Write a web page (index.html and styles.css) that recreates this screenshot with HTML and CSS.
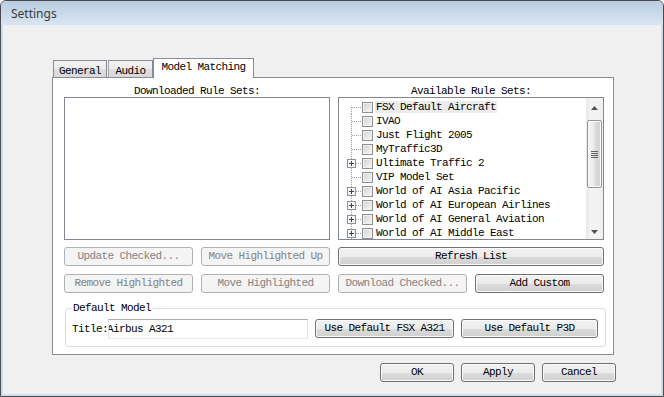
FILE: index.html
```html
<!DOCTYPE html>
<html lang="en">

<head>
    <meta charset="UTF-8">
    <title>Settings</title>
    <link rel="stylesheet" href="styles.css">
</head>

<body>
    <!-- tree connector pieces, reused by every row -->
    <svg class="defs" width="0" height="0">
        <symbol id="b-first" viewBox="0 0 15 14">
            <line x1="4.5" y1="7" x2="4.5" y2="14" stroke="#a0a0a0" stroke-dasharray="1 1" />
            <line x1="5" y1="7.5" x2="15" y2="7.5" stroke="#a0a0a0" stroke-dasharray="1 1" />
        </symbol>
        <symbol id="b-leaf" viewBox="0 0 15 14">
            <line x1="4.5" y1="0" x2="4.5" y2="14" stroke="#a0a0a0" stroke-dasharray="1 1" />
            <line x1="5" y1="7.5" x2="15" y2="7.5" stroke="#a0a0a0" stroke-dasharray="1 1" />
        </symbol>
        <symbol id="b-plus" viewBox="0 0 15 14">
            <line x1="4.5" y1="0" x2="4.5" y2="14" stroke="#a0a0a0" stroke-dasharray="1 1" />
            <line x1="9" y1="7.5" x2="15" y2="7.5" stroke="#a0a0a0" stroke-dasharray="1 1" />
            <rect x="0.5" y="3.5" width="8" height="8" fill="#f7f7f7" stroke="#919191" />
            <path d="M2 7.5h5M4.5 5v5" stroke="#1f4a8a" />
        </symbol>
    </svg>

    <div class="window">
        <div class="titlebar">Settings</div>
        <div class="client">
            <div class="tabstrip">
                <div class="tab tab-general">General</div>
                <div class="tab tab-audio">Audio</div>
                <div class="tab tab-models active">Model Matching</div>
            </div>
            <div class="panel">
                <div class="grid">
                    <div class="label">Downloaded Rule Sets:</div>
                    <div class="label">Available Rule Sets:</div>

                    <div class="list"></div>
                    <div class="list avail">
                        <div class="tree">
                            <div class="node"><svg class="branch"><use href="#b-first" /></svg><span class="check"></span><span class="name focus">FSX Default Aircraft</span></div>
                            <div class="node"><svg class="branch"><use href="#b-leaf" /></svg><span class="check"></span><span class="name">IVAO</span></div>
                            <div class="node"><svg class="branch"><use href="#b-leaf" /></svg><span class="check"></span><span class="name">Just Flight 2005</span></div>
                            <div class="node"><svg class="branch"><use href="#b-leaf" /></svg><span class="check"></span><span class="name">MyTraffic3D</span></div>
                            <div class="node"><svg class="branch"><use href="#b-plus" /></svg><span class="check"></span><span class="name">Ultimate Traffic 2</span></div>
                            <div class="node"><svg class="branch"><use href="#b-leaf" /></svg><span class="check"></span><span class="name">VIP Model Set</span></div>
                            <div class="node"><svg class="branch"><use href="#b-plus" /></svg><span class="check"></span><span class="name">World of AI Asia Pacific</span></div>
                            <div class="node"><svg class="branch"><use href="#b-plus" /></svg><span class="check"></span><span class="name">World of AI European Airlines</span></div>
                            <div class="node"><svg class="branch"><use href="#b-plus" /></svg><span class="check"></span><span class="name">World of AI General Aviation</span></div>
                            <div class="node"><svg class="branch"><use href="#b-plus" /></svg><span class="check"></span><span class="name">World of AI Middle East</span></div>
                        </div>
                        <div class="vscroll">
                            <div class="arrow"><svg width="7" height="4"><path d="M3.5 0L7 4H0z" fill="#505050" /></svg></div>
                            <div class="thumb"><span class="grip"></span></div>
                            <div class="track"></div>
                            <div class="arrow"><svg width="7" height="4"><path d="M0 0H7L3.5 4z" fill="#505050" /></svg></div>
                        </div>
                    </div>

                    <button class="btn row1" disabled>Update Checked...</button>
                    <button class="btn row1" disabled>Move Highlighted Up</button>
                    <button class="btn row1 wide">Refresh List</button>

                    <button class="btn row2" disabled>Remove Highlighted</button>
                    <button class="btn row2" disabled>Move Highlighted</button>
                    <button class="btn row2" disabled>Download Checked...</button>
                    <button class="btn row2">Add Custom</button>
                </div>

                <fieldset class="group">
                    <legend>Default Model</legend>
                    <div class="group-row">
                        <span class="title-label">Title:</span>
                        <div class="field">Airbus A321</div>
                        <button class="btn fsx">Use Default FSX A321</button>
                        <button class="btn p3d">Use Default P3D</button>
                    </div>
                </fieldset>
            </div>

            <div class="footer">
                <button class="btn dlg">OK</button>
                <button class="btn dlg">Apply</button>
                <button class="btn dlg">Cancel</button>
            </div>
        </div>
    </div>
</body>

</html>
```

FILE: styles.css
```css
* {
    box-sizing: border-box;
}

body {
    margin: 0;
    background: #ffffff;
    color: #000;
    font-family: "Liberation Mono", "DejaVu Sans Mono", monospace;
    font-size: 11px;
    letter-spacing: -0.6px;
}

.defs {
    position: absolute;
    width: 0;
    height: 0;
}

.window {
    width: 664px;
    height: 397px;
    border: 1px solid #4b4b4b;
    border-radius: 6px 6px 0 0;
    background: #cfdeec;
    display: flex;
    flex-direction: column;
    overflow: hidden;
}

.titlebar {
    flex: none;
    height: 24px;
    line-height: 25px;
    padding-left: 10px;
    background: linear-gradient(#b9cde0, #d9e6f2);
    color: #3b3b3b;
    font-family: "Noto Sans", "Open Sans", sans-serif;
    font-size: 12px;
    letter-spacing: 0;
}

.client {
    flex: 1;
    margin: 0 2px 2px;
    padding: 33px 45px 10px 49px;
    background: #f0f0f0;
    display: flex;
    flex-direction: column;
}

/* tabs */
.tabstrip {
    display: flex;
    align-items: flex-start;
    height: 20px;
    margin-bottom: -1px;
    padding-left: 1px;
    position: relative;
    z-index: 1;
}

.tab {
    height: 17px;
    margin-top: 2px;
    border: 1px solid #898c95;
    border-bottom: none;
    background: linear-gradient(#f3f3f3, #ebebeb 50%, #dedede 51%, #d9d9d9);
    text-align: center;
    line-height: 20px;
    white-space: nowrap;
}

.tab-general {
    width: 54px;
}

.tab-audio {
    width: 45px;
    margin-left: 1px;
    border-left-color: #a0a3aa;
}

.tab-models {
    width: 101px;
}

.tab.active {
    height: 20px;
    margin-top: 0;
    background: #fff;
    line-height: 17px;
}

.panel {
    border: 1px solid #898c95;
    background: #fff;
    margin-right: 2px;
    padding: 7px 8px 7px 11px;
}

.grid {
    display: grid;
    grid-template-columns: repeat(4, 129px);
    column-gap: 8px;
}

.label {
    grid-column: span 2;
    text-align: center;
    line-height: 12px;
    white-space: nowrap;
}

.list {
    grid-column: span 2;
    height: 143px;
    border: 1px solid #828790;
    background: #fff;
}

/* available rule sets tree */
.avail {
    display: flex;
    overflow: hidden;
}

.tree {
    flex: 1;
    padding-top: 2px;
    overflow: hidden;
}

.node {
    display: flex;
    align-items: center;
    height: 14px;
    padding-left: 8px;
    white-space: nowrap;
}

.branch {
    flex: none;
    width: 15px;
    height: 14px;
}

.check {
    flex: none;
    width: 11px;
    height: 11px;
    border: 1px solid #8e8f8f;
    background: linear-gradient(135deg, #d3d3d3, #f6f6f6);
    box-shadow: inset 0 0 0 1px #f1f1f1;
}

.name {
    margin-left: 2px;
    padding: 0 1px;
    line-height: 12px;
}

.name.focus {
    background: #ececec;
}

.vscroll {
    flex: none;
    width: 17px;
    display: flex;
    flex-direction: column;
    background: linear-gradient(to right, #e8e8e8, #f4f4f4 30%, #f1f1f1);
}

.arrow {
    height: 17px;
    display: flex;
    align-items: center;
    justify-content: center;
    padding-top: 3px;
}

.arrow svg {
    display: block;
}

.thumb {
    height: 68px;
    margin: 5px 1px 0;
    border: 1px solid #979797;
    border-radius: 2px;
    background: linear-gradient(to right, #f6f6f6, #ececec 45%, #dcdcdc 55%, #d0d0d0);
    box-shadow: inset 0 0 0 1px #fbfbfb;
    display: flex;
    align-items: center;
    justify-content: center;
}

.grip {
    width: 7px;
    height: 7px;
    background: repeating-linear-gradient(#606060 0 1px, transparent 1px 2px);
}

.track {
    flex: 1;
}

/* buttons */
.btn {
    height: 19px;
    padding: 0;
    border: 1px solid #707070;
    border-radius: 3px;
    background: linear-gradient(#f2f2f2, #ebebeb 50%, #dddddd 51%, #cfcfcf);
    box-shadow: inset 0 0 0 1px #fbfbfb;
    color: #000;
    font: inherit;
    letter-spacing: inherit;
    line-height: 17px;
    white-space: nowrap;
}

.btn:disabled {
    border-color: #adb2b5;
    background: #f4f4f4;
    box-shadow: none;
    color: #838383;
}

.row1 {
    margin-top: 7px;
}

.row2 {
    margin-top: 8px;
}

.wide {
    grid-column: span 2;
}

/* default model group */
.group {
    margin: 9px -1px 0 1px;
    padding: 5px 6px 7px 6px;
    border: 1px solid #d5dfe5;
    border-radius: 3px;
    min-width: 0;
}

.group legend {
    padding: 0 1px;
    line-height: 12px;
}

.group-row {
    display: flex;
    align-items: flex-start;
}

.title-label {
    line-height: 20px;
    margin-right: 0;
}

.field {
    width: 200px;
    height: 20px;
    border: 1px solid;
    border-color: #abadb3 #dbdfe6 #e3e9ef #e2e3ea;
    background: #fff;
    line-height: 18px;
    text-indent: -2px;
    overflow: hidden;
    white-space: nowrap;
}

.fsx {
    width: 139px;
    margin-left: 7px;
}

.p3d {
    width: 137px;
    margin-left: 7px;
}

.footer {
    display: flex;
    justify-content: flex-end;
    gap: 7px;
    margin-top: 8px;
}

.dlg {
    width: 74px;
}
```
